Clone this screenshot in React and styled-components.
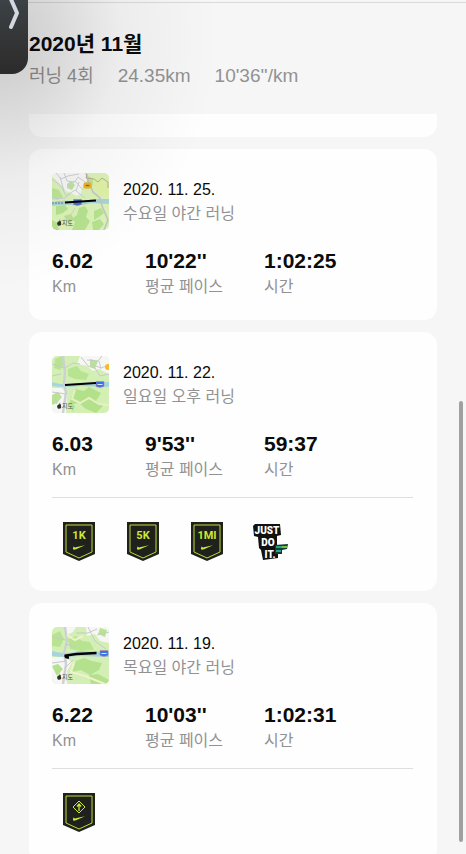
import styled, { createGlobalStyle } from "styled-components"

const runs = [
    {
        date: "2020. 11. 25.",
        title: "수요일 야간 러닝",
        km: "6.02",
        pace: "10'22''",
        time: "1:02:25",
        map: "east",
        badges: [],
    },
    {
        date: "2020. 11. 22.",
        title: "일요일 오후 러닝",
        km: "6.03",
        pace: "9'53''",
        time: "59:37",
        map: "middle",
        badges: ["1K", "5K", "1MI", "just"],
    },
    {
        date: "2020. 11. 19.",
        title: "목요일 야간 러닝",
        km: "6.22",
        pace: "10'03''",
        time: "1:02:31",
        map: "west",
        badges: ["longest"],
    },
]

const MapLogo = () => (
    <g>
        <path d="M6.500 48.500q1.600-1 2.700.2-.9 1.200.2 2.300-.8 2-1.800 1.600-1 .4-1.900-.4-1.500-2.400.8-3.700zM7.300 48q0-1.200 1-1.600 0 1.200-1 1.600z" fill="#2a3326" />
        <MapText x="10" y="52">지도</MapText>
    </g>
)

const EastMap = () => (
    <MapSvg viewBox="0 0 57 57" role="img" aria-label="러닝 경로">
        <rect width="57" height="57" fill="#daf2b8" />
        <path d="M0 0H34L36 6 31 12 29 20 25 23 14 18 7 10 0 3z" fill="#f6f6f4" />
        <path d="M15 11l4-3 4 4-3 5-5-2zM36 3l6 3-2 8-6-3zM0 15l7 2 4 7-6 3-5-2z" fill="#bce598" />
        <path d="M27 35l6-2 3 5-2 6 4 4-5 9H20l3-8-3-3 5-4zM4 33l9-1 3 4-5 4-7 2zM12 43l7-2 3 5-5 5zM42 38l7-3 3 5-5 4-5 3zM40 49l8-3 4 5-5 6h-6zM0 47l5 3 2 7H0z" fill="#b6e28f" />
        <path d="M41 4l9 1 7 9v8l-9 1-7-9z" fill="#def1a6" />
        <path d="M0 29q10-2 20-1t21-2l16 0v5l-17-1q-12 3-20 2t-20 1z" fill="#a7d4d5" />
        <path d="M34 0l2 7 5 12 7 6 2 8 6 14-4 10" fill="none" stroke="#c3c4c6" strokeWidth="1.600" />
        <path d="M0 6l9 7 5 10 9-6 10 8M12 0l3 8 8 1 3-5 7 5M4 0l5 6 7-3 11-2M16 14l7-6 8 9M0 26l13-1 6-5M8 4l4 14M27 9l-3 9" fill="none" stroke="#cbcfd6" />
        <path d="M35 1l-1 4 8 1 4 3 4-4 6 4v6" fill="none" stroke="#b99a8b" strokeWidth=".8" />
        <path d="M23 35l-6 10-14 5" fill="none" stroke="#d0d8b0" />
        <rect x="32" y="10" width="7" height="5" rx="1" fill="#f6be30" stroke="#eba51c" />
        <path d="M33.500 12.500h4" stroke="#8c6a1c" strokeWidth="1.500" />
        <path d="M21.500 26.500h8v5l-4 1-4-1z" fill="#3f72d6" stroke="#c47382" strokeWidth=".6" />
        <path d="M0 30h11" stroke="#8fa6b0" strokeWidth="2" strokeDasharray="2 1" />
        <path d="M13 29.500L44 27.500" stroke="#020202" strokeWidth="2" />
        <MapLogo />
    </MapSvg>
)

const MiddleMap = () => (
    <MapSvg viewBox="0 0 57 57" role="img" aria-label="러닝 경로">
        <rect width="57" height="57" fill="#d3efb4" />
        <path d="M28 0h29v18l-10-5-6 2-6-5-10-2zM0 32l10 0 5 6-1 19H0z" fill="#f6f6f4" />
        <path d="M3 3l7-3 2 8-4 6-6-2zM16 13l9-3 4 5 8 3-3 6-11-1-7-3zM38 3l8 2-3 8-5-2zM0 39l6-3 4 5-5 6-5 2z" fill="#b8e491" />
        <path d="M23 33l9 2 5-4 12 6-5 8 7 5-7 7-10-4-7-6-10 2 2-7zM17 46l6 4-2 6z" fill="#b2e18a" />
        <path d="M0 26q12 4 27 1l30-1v5l-29-1q-16 2-28 0z" fill="#a7d5df" />
        <path d="M11 0l2 16-1 12 2 8-3 21" fill="none" stroke="#cdd1d5" strokeWidth="2.400" />
        <path d="M29 1l7 9 7 2 5 8 9-2M35 4l11 1 4-5M39 8l10 4 8-3M47 5l2 8M0 8l13 4 8-5 7 1M0 20l9-2M0 36l14 2M3 40l2 8" fill="none" stroke="#c5c9cc" />
        <path d="M23 34l-3 9 8 4 9-5 10 6 10 1" fill="none" stroke="#e6f0c4" strokeWidth="2" />
        <circle cx="56" cy="11" r="3" fill="#f4bc2a" />
        <path d="M44 25.500h8v5l-4 1-4-1z" fill="#3474e6" stroke="#c68396" strokeWidth=".6" />
        <path d="M45.500 28.500h5" stroke="#dbe7ff" />
        <path d="M13 29L44 27" stroke="#020202" strokeWidth="2.200" />
        <MapLogo />
    </MapSvg>
)

const WestMap = () => (
    <MapSvg viewBox="0 0 57 57" role="img" aria-label="러닝 경로">
        <rect width="57" height="57" fill="#d3efb5" />
        <path d="M34 0h23v16l-9-2-5-7-8 2zM0 30l12 0 8 5-5 9v13H0zM13 0h11l-3 5-8 4z" fill="#f6f6f4" />
        <path d="M0 8l8-4 4 8-4 8-8-1zM16 12l8-3 6 5 8 1 4 8-13 1-11-2zM48 1l7 2-2 7-7-3z" fill="#b8e491" />
        <path d="M24 34l8-3 8 3 10 2-3 7-9 5-9-5-9 2zM37 48l9-1 11 6v4H39zM0 39l6-2 5 5-6 7z" fill="#b3e18d" />
        <path d="M0 24q14 4 27 0l30 1v5l-31-1q-13 2-26 0z" fill="#a6d4dd" />
        <path d="M13 0l2 14-3 12 2 11-3 20" fill="none" stroke="#cdd1d5" strokeWidth="2.400" />
        <path d="M0 10l14 3M36 0l7 14 11 8M24 6l12 0 9-4M45 8l12-3M0 36l15-2M14 17l8 3M21 33l-8 8" fill="none" stroke="#c5c9cc" />
        <path d="M22 35l-3 10 14 4 20 8M15 8l8 5 8-4" fill="none" stroke="#eff2cb" strokeWidth="2" />
        <path d="M48 23.500h8v5l-4 1-4-1z" fill="#3474e6" stroke="#c68396" strokeWidth=".6" />
        <path d="M49.500 26.500h5" stroke="#dbe7ff" />
        <path d="M17 30.500q-4 .5-3.500-2l11-1.500 20-1" fill="none" stroke="#020202" strokeWidth="2.400" />
        <MapLogo />
    </MapSvg>
)

const maps = { east: EastMap, middle: MiddleMap, west: WestMap }

const Badge = ({ kind }) => {
    if (kind === "just") {
        return (
            <BadgeSvg $wide viewBox="0 0 36 39" role="img" aria-label="Just do it">
                <path d="M0 4L2 2H27L28 13 24 14 24 23 25 25 25 36 10 38 8 28 6 26 5 15 1 14z" fill="#111" />
                <JustText x="14" y="12">JUST</JustText>
                <JustText x="15" y="24">DO</JustText>
                <JustText x="17" y="36">IT.</JustText>
                <path d="M22 23l13-1-1 5-5 1v4h-7z" fill="#123c33" />
                <path d="M23 25h6M23 29h5" stroke="#23a587" strokeWidth="2" />
                <path d="M29 25h5" stroke="#6fc14c" strokeWidth="2" />
            </BadgeSvg>
        )
    }
    return (
        <BadgeSvg viewBox="0 0 32 39" role="img" aria-label={kind}>
            <path d="M0 0H32V32L16 39 0 32z" fill="#20211d" />
            <path d="M3 3H29V30L16 36 3 30z" fill="none" stroke="#b9dc35" />
            {kind === "longest" ? (
                <g fill="none" stroke="#cce934">
                    <path d="M16 8l6 6-6 6-6-6z" />
                    <path d="M16 18v-6M14 13.500l2-2.500 2 2.500" strokeWidth="1.300" />
                </g>
            ) : (
                <BadgeText x="16" y="17">{kind}</BadgeText>
            )}
            <path d="M11 24c-2 3-1 4.500 2 3.200L22 23.200l-8 1.900c-2.500.7-3.300 0-3-1.100z" fill="#cce934" />
        </BadgeSvg>
    )
}

const RunCard = ({ run }) => {
    const RouteMap = maps[run.map]
    return (
        <Card>
            <RunHead>
                <RouteMap />
                <div>
                    <RunDate>{run.date}</RunDate>
                    <RunTitle>{run.title}</RunTitle>
                </div>
            </RunHead>
            <Stats>
                <div>
                    <StatValue>{run.km}</StatValue>
                    <StatLabel>Km</StatLabel>
                </div>
                <div>
                    <StatValue>{run.pace}</StatValue>
                    <StatLabel>평균 페이스</StatLabel>
                </div>
                <div>
                    <StatValue>{run.time}</StatValue>
                    <StatLabel>시간</StatLabel>
                </div>
            </Stats>
            {run.badges.length > 0 && (
                <Badges>
                    {run.badges.map((kind) => <Badge key={kind} kind={kind} />)}
                </Badges>
            )}
        </Card>
    )
}

const App = () => {
    return (
        <Page>
            <GlobalStyle />
            <Header>
                <h1>2020년 11월</h1>
                <Summary>
                    <SummaryCount>러닝 4회</SummaryCount>
                    <span>24.35km</span>
                    <span>10'36''/km</span>
                </Summary>
            </Header>
            <List>
                <CardEnd />
                {runs.map((run) => <RunCard key={run.date} run={run} />)}
            </List>
            <Shade />
            <Handle type="button" aria-label="열기">
                <svg width="28" height="74" viewBox="0 0 28 74" aria-hidden="true">
                    <path d="M10-3l7 16-6 14" fill="none" stroke="#d2d7e1" strokeWidth="4" strokeLinecap="round" strokeLinejoin="round" />
                </svg>
            </Handle>
            <ScrollThumb />
        </Page>
    )
}

const GlobalStyle = createGlobalStyle`
    *{
        box-sizing: border-box;
    }

    body{
        margin: 0;
        background: #f6f6f6;
        color: #0b0b0b;
        font-family: "Liberation Sans", "Noto Sans CJK KR", sans-serif;
    }

    h1, h2, p{
        margin: 0;
    }
`

const Page = styled.main`
    position: relative;
    height: 100vh;
    overflow: hidden;
`

const Header = styled.header`
    margin-top: 2px;
    padding: 26px 29px 22px;
    border-top: 1px solid #dadada;

    h1{
        font-size: 21px;
        font-weight: 700;
        line-height: 30px;
    }
`

const Summary = styled.div`
    display: flex;
    align-items: baseline;
    gap: 24px;
    height: 33px;
    font-size: 19px;
    line-height: 34px;
    color: #929292;
`

const SummaryCount = styled.span`
    font-size: 18px;
`

const List = styled.div`
    display: flex;
    flex-direction: column;
    gap: 12px;
    padding: 0 29px;
`

const Card = styled.article`
    padding: 24px 24px 22px 23px;
    border-radius: 13px;
    background: #fefefe;
`

// the previous run, scrolled under the header
const CardEnd = styled.div`
    height: 23px;
    border-radius: 0 0 13px 13px;
    background: #fefefe;
`

const RunHead = styled.div`
    display: flex;
    align-items: center;
    gap: 14px;
`

const RunDate = styled.h2`
    font-size: 16px;
    font-weight: 400;
    line-height: 24px;
`

const RunTitle = styled.p`
    font-size: 16px;
    line-height: 24px;
    color: #929292;
`

const Stats = styled.div`
    display: grid;
    grid-template-columns: 93px 119px 1fr;
    margin-top: 17px;
`

const StatValue = styled.p`
    font-size: 21px;
    font-weight: 700;
    line-height: 28px;
`

const StatLabel = styled.p`
    font-size: 16px;
    line-height: 23px;
    color: #929292;
`

const Badges = styled.div`
    display: flex;
    gap: 32px;
    margin-top: 16px;
    padding: 24px 11px 8px;
    border-top: 1px solid #dedede;
`

const MapSvg = styled.svg`
    width: 57px;
    height: 57px;
    border-radius: 5px;
`

const MapText = styled.text`
    font-size: 6px;
    fill: #485343;
`

const BadgeSvg = styled.svg`
    width: ${(props) => (props.$wide ? "36px" : "32px")};
    height: 39px;
    margin-left: ${(props) => (props.$wide ? "-2px" : "0")};
`

const BadgeText = styled.text`
    font-family: Roboto, "Liberation Sans", sans-serif;
    font-size: 11px;
    font-weight: 700;
    text-anchor: middle;
    fill: #cce934;
`

const JustText = styled.text`
    font-family: Roboto, "Liberation Sans", sans-serif;
    font-size: 10px;
    font-weight: 900;
    text-anchor: middle;
    fill: #ffffff;
`

const Shade = styled.div`
    position: absolute;
    inset: 0;
    background: radial-gradient(ellipse 220px 250px at 0 40px, rgba(0,0,0,0.18) 0%, rgba(0,0,0,0.12) 25%, rgba(0,0,0,0.04) 55%, rgba(0,0,0,0.01) 85%, rgba(0,0,0,0) 100%);
    pointer-events: none;
`

const Handle = styled.button`
    position: absolute;
    top: 0;
    left: 0;
    width: 28px;
    height: 74px;
    padding: 0;
    border: 0;
    border-radius: 0 0 16px 0;
    background: linear-gradient(180deg, #3c4245 0%, #343637 50%, #2d2b2b 100%);

    svg{
        display: block;
    }
`

const ScrollThumb = styled.div`
    position: absolute;
    top: 47%;
    right: 3px;
    bottom: 12px;
    width: 4px;
    border-radius: 2px;
    background: #a0a0a0;
`

export default App
